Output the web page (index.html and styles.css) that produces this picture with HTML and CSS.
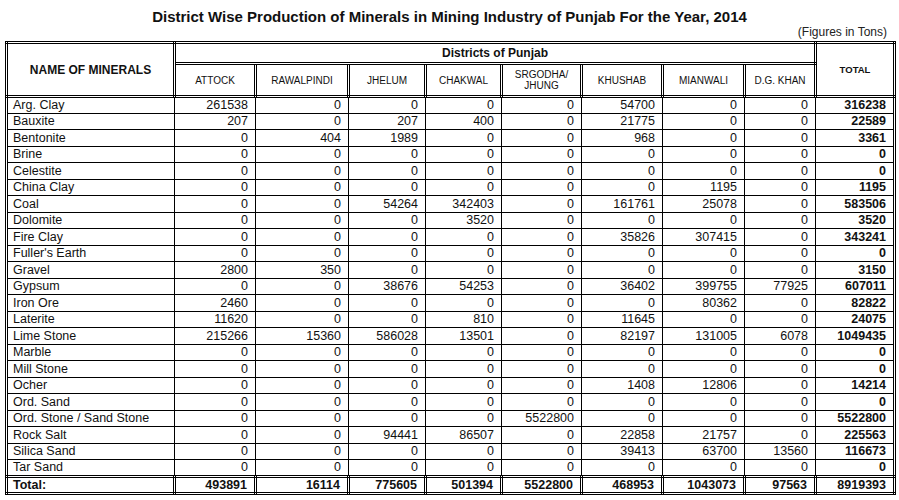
FILE: index.html
```html
<!DOCTYPE html>
<html>
<head>
<meta charset="utf-8">
<link rel="stylesheet" href="styles.css">
</head>
<body>
<div class="page">
  <h1 class="title">District Wise Production of Minerals in Mining Industry of Punjab For the Year, 2014</h1>
  <div class="unit">(Figures in Tons)</div>
  <table class="grid">
    <colgroup>
      <col class="c-name"><col class="c-att"><col class="c-rwp"><col class="c-jhl"><col class="c-chk"><col class="c-srg"><col class="c-khu"><col class="c-mia"><col class="c-dgk"><col class="c-tot">
    </colgroup>
    <thead>
      <tr class="h1">
        <th rowspan="2" class="hname">NAME OF MINERALS</th>
        <th colspan="8" class="hdist">Districts of Punjab</th>
        <th rowspan="2" class="htot">TOTAL</th>
      </tr>
      <tr class="h2">
        <th class="hd">ATTOCK</th>
        <th class="hd">RAWALPINDI</th>
        <th class="hd">JHELUM</th>
        <th class="hd">CHAKWAL</th>
        <th class="hd">SRGODHA/<br>JHUNG</th>
        <th class="hd">KHUSHAB</th>
        <th class="hd">MIANWALI</th>
        <th class="hd">D.G. KHAN</th>
      </tr>
    </thead>
    <tbody>
      <tr><td class="name">Arg. Clay</td><td>261538</td><td>0</td><td>0</td><td>0</td><td>0</td><td>54700</td><td>0</td><td>0</td><td class="tot">316238</td></tr>
      <tr><td class="name">Bauxite</td><td>207</td><td>0</td><td>207</td><td>400</td><td>0</td><td>21775</td><td>0</td><td>0</td><td class="tot">22589</td></tr>
      <tr><td class="name">Bentonite</td><td>0</td><td>404</td><td>1989</td><td>0</td><td>0</td><td>968</td><td>0</td><td>0</td><td class="tot">3361</td></tr>
      <tr><td class="name">Brine</td><td>0</td><td>0</td><td>0</td><td>0</td><td>0</td><td>0</td><td>0</td><td>0</td><td class="tot">0</td></tr>
      <tr><td class="name">Celestite</td><td>0</td><td>0</td><td>0</td><td>0</td><td>0</td><td>0</td><td>0</td><td>0</td><td class="tot">0</td></tr>
      <tr><td class="name">China Clay</td><td>0</td><td>0</td><td>0</td><td>0</td><td>0</td><td>0</td><td>1195</td><td>0</td><td class="tot">1195</td></tr>
      <tr><td class="name">Coal</td><td>0</td><td>0</td><td>54264</td><td>342403</td><td>0</td><td>161761</td><td>25078</td><td>0</td><td class="tot">583506</td></tr>
      <tr><td class="name">Dolomite</td><td>0</td><td>0</td><td>0</td><td>3520</td><td>0</td><td>0</td><td>0</td><td>0</td><td class="tot">3520</td></tr>
      <tr><td class="name">Fire Clay</td><td>0</td><td>0</td><td>0</td><td>0</td><td>0</td><td>35826</td><td>307415</td><td>0</td><td class="tot">343241</td></tr>
      <tr><td class="name">Fuller's Earth</td><td>0</td><td>0</td><td>0</td><td>0</td><td>0</td><td>0</td><td>0</td><td>0</td><td class="tot">0</td></tr>
      <tr><td class="name">Gravel</td><td>2800</td><td>350</td><td>0</td><td>0</td><td>0</td><td>0</td><td>0</td><td>0</td><td class="tot">3150</td></tr>
      <tr><td class="name">Gypsum</td><td>0</td><td>0</td><td>38676</td><td>54253</td><td>0</td><td>36402</td><td>399755</td><td>77925</td><td class="tot">607011</td></tr>
      <tr><td class="name">Iron Ore</td><td>2460</td><td>0</td><td>0</td><td>0</td><td>0</td><td>0</td><td>80362</td><td>0</td><td class="tot">82822</td></tr>
      <tr><td class="name">Laterite</td><td>11620</td><td>0</td><td>0</td><td>810</td><td>0</td><td>11645</td><td>0</td><td>0</td><td class="tot">24075</td></tr>
      <tr><td class="name">Lime Stone</td><td>215266</td><td>15360</td><td>586028</td><td>13501</td><td>0</td><td>82197</td><td>131005</td><td>6078</td><td class="tot">1049435</td></tr>
      <tr><td class="name">Marble</td><td>0</td><td>0</td><td>0</td><td>0</td><td>0</td><td>0</td><td>0</td><td>0</td><td class="tot">0</td></tr>
      <tr><td class="name">Mill Stone</td><td>0</td><td>0</td><td>0</td><td>0</td><td>0</td><td>0</td><td>0</td><td>0</td><td class="tot">0</td></tr>
      <tr><td class="name">Ocher</td><td>0</td><td>0</td><td>0</td><td>0</td><td>0</td><td>1408</td><td>12806</td><td>0</td><td class="tot">14214</td></tr>
      <tr><td class="name">Ord. Sand</td><td>0</td><td>0</td><td>0</td><td>0</td><td>0</td><td>0</td><td>0</td><td>0</td><td class="tot">0</td></tr>
      <tr><td class="name">Ord. Stone / Sand Stone</td><td>0</td><td>0</td><td>0</td><td>0</td><td>5522800</td><td>0</td><td>0</td><td>0</td><td class="tot">5522800</td></tr>
      <tr><td class="name">Rock Salt</td><td>0</td><td>0</td><td>94441</td><td>86507</td><td>0</td><td>22858</td><td>21757</td><td>0</td><td class="tot">225563</td></tr>
      <tr><td class="name">Silica Sand</td><td>0</td><td>0</td><td>0</td><td>0</td><td>0</td><td>39413</td><td>63700</td><td>13560</td><td class="tot">116673</td></tr>
      <tr><td class="name">Tar Sand</td><td>0</td><td>0</td><td>0</td><td>0</td><td>0</td><td>0</td><td>0</td><td>0</td><td class="tot">0</td></tr>
    </tbody>
    <tfoot>
      <tr class="totals"><td class="name">Total:</td><td>493891</td><td>16114</td><td>775605</td><td>501394</td><td>5522800</td><td>468953</td><td>1043073</td><td>97563</td><td class="tot">8919393</td></tr>
    </tfoot>
  </table>
</div>
</body>
</html>
```

FILE: styles.css
```css
html, body {
  margin: 0;
  padding: 0;
  background: #fff;
}
body {
  font-family: "Liberation Sans", Arial, sans-serif;
  color: #000;
}
.page {
  width: 899px;
}
.title {
  margin: 0;
  padding-top: 8px;
  font-size: 15px;
  line-height: 17px;
  font-weight: bold;
  text-align: center;
  color: #111;
}
.unit {
  text-align: right;
  font-size: 12px;
  line-height: 15px;
  padding-right: 12px;
  margin-bottom: 1px;
  color: #222;
}
.grid {
  margin-left: 5px;
  width: 889px;
  table-layout: fixed;
  border-collapse: collapse;
  border: 3px double #000;
}
.c-name { width: 168px; }
.c-att { width: 81px; }
.c-rwp { width: 93px; }
.c-jhl { width: 77px; }
.c-chk { width: 76px; }
.c-srg { width: 80px; }
.c-khu { width: 81px; }
.c-mia { width: 82px; }
.c-dgk { width: 71px; }
.c-tot { width: 79px; }

.grid th {
  border: 3px double #000;
  padding: 0;
  text-align: center;
  vertical-align: middle;
  color: #111;
}
.h1 { height: 21px; }
.h2 { height: 33px; }
.hname {
  font-size: 12px;
  font-weight: bold;
}
.hdist {
  font-size: 12px;
  font-weight: bold;
  line-height: 14px;
}
.htot {
  font-size: 9.5px;
  font-weight: bold;
  padding-bottom: 4px;
}
.hd {
  font-size: 10px;
  font-weight: normal;
  line-height: 11px;
}
.grid td {
  border: 1px solid #000;
  padding: 0 7px 0 5px;
  font-size: 12.5px;
  line-height: 14px;
  text-align: right;
  white-space: nowrap;
  color: #111;
}
.grid tbody tr {
  height: 16.5px;
}
.grid td.name {
  text-align: left;
}
.grid td.tot {
  font-weight: bold;
}
.grid tfoot td {
  border: 3px double #000;
  font-weight: bold;
}
.totals {
  height: 17px;
}
```
